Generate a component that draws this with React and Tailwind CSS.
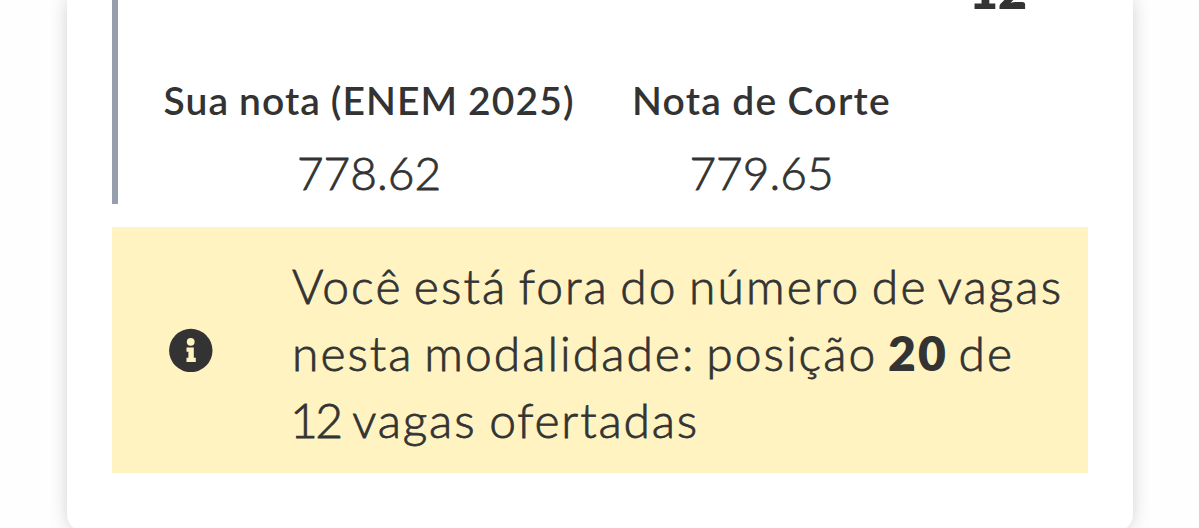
import React from "react";

const scores = [
    { label: "Sua nota (ENEM 2025)", value: "778.62", width: "w-[412px]", tracking: "tracking-[1.1px] [word-spacing:-1px]" },
    { label: "Nota de Corte", value: "779.65", width: "w-[259px]", tracking: "tracking-[1.3px] [word-spacing:-1px]" },
];

const InfoIcon = () => (
    <svg viewBox="0 0 44 44" className="w-11 h-11 shrink-0" fill="none">
        <circle cx="21.8" cy="22.5" r="21.7" fill="#333333" />
        <circle cx="21.7" cy="13.8" r="3.9" fill="#fff3c2" />
        <path d="M17.5 19.4h7.3v10.3h2v4.3h-9.3v-4.3h1.9v-6h-1.9z" fill="#fff3c2" />
    </svg>
);

export default function App() {
    return (
        <div className="h-[528px] overflow-hidden bg-[#fefefe] pl-[67px] pr-[66px] font-['Lato',sans-serif] text-[#333333]">
            <main className="h-[532px] rounded-b-[18px] bg-white px-[45px] shadow-[0_0_18px_rgba(0,0,0,0.18)]">
                <section className="h-[204px] border-l-[6px] border-[#979fac] pl-[45px]">
                    {/* Vacancies, scrolled almost out of view */}
                    <div className="flex h-[78px] justify-end pr-[61px]">
                        <span className="-mt-[35px] text-[50px] leading-none font-extrabold">12</span>
                    </div>

                    <div className="flex gap-[57px]">
                        {scores.map((score) => (
                            <div key={score.label} className={`flex flex-col items-center whitespace-nowrap ${score.width}`}>
                                <span className={`text-[39px] leading-[44px] font-semibold ${score.tracking}`}>{score.label}</span>
                                <span className="mt-[27px] text-[46px] leading-[48px] font-light [-webkit-text-stroke:0.8px_#333333]">{score.value}</span>
                            </div>
                        ))}
                    </div>
                </section>

                <section className="mt-[23px] flex h-[246px] items-center bg-[#fff3c2] pl-[57px]">
                    <InfoIcon />
                    <p className="ml-[79px] flex flex-col pt-[4px] text-[48px] leading-[67px] font-light whitespace-nowrap [-webkit-text-stroke:0.8px_#333333]">
                        <span className="tracking-[2.1px] [word-spacing:-3.8px]">Você está fora do número de vagas</span>
                        <span className="tracking-[2px] [word-spacing:-4.2px]">nesta modalidade: posição <b className="font-extrabold [-webkit-text-stroke:0]">20</b> de</span>
                        <span className="tracking-[1.8px] [word-spacing:-2px]"><span className="-ml-[2px] tracking-[-2.5px]">12</span> vagas ofertadas</span>
                    </p>
                </section>
            </main>
        </div>
    );
}
